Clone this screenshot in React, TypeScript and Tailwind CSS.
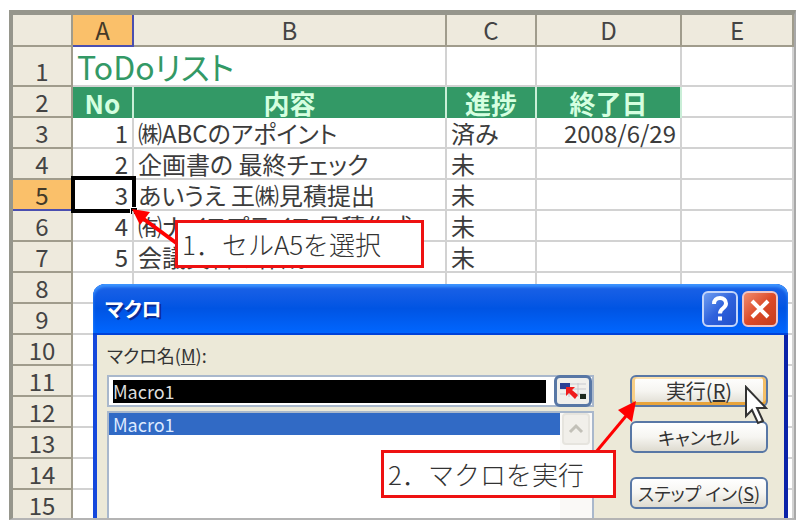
import { useState } from 'react'

const columns = ['A', 'B', 'C', 'D', 'E']

const todos = [
  { no: 1, title: '㈱ABCのアポイント', status: '済み', end: '2008/6/29' },
  { no: 2, title: '企画書の 最終チェック', status: '未', end: '' },
  { no: 3, title: 'あいうえ 王㈱見積提出', status: '未', end: '' },
  { no: 4, title: '㈲ナイスプライス 見積作成', status: '未', end: '' },
  { no: 5, title: '会議資料の作成', status: '未', end: '' },
]

const emptyRows = [8, 9, 10, 11, 12, 13, 14, 15]

const rowHead = 'border-r-2 border-b-2 border-[#a09c8c] bg-[#eeeadd] text-center font-normal text-[#444]'
const activeHead = 'border-r-2 border-b-2 border-[#4a4fb0] bg-[#fac06a] text-center font-normal text-[#443a28]'
const cell = 'border-r-2 border-b-2 border-[#d2d2d2] px-1 whitespace-nowrap'
const titleCell =
  'border-r-2 border-[#c9eed7] bg-[#339966] text-center text-[26px] leading-7 font-bold text-[#d5ffe0]'

function Sheet() {
  return (
    <table className="w-full table-fixed border-separate border-spacing-0 text-2xl leading-7 text-[#3c3c3c]">
      <colgroup>
        <col className="w-[60px]" />
        <col className="w-[61px]" />
        <col className="w-[313px]" />
        <col className="w-[90px]" />
        <col className="w-[145px]" />
        <col />
      </colgroup>
      <thead>
        <tr className="h-8">
          <th className={rowHead} />
          {columns.map((name) => (
            <th key={name} scope="col" className={name === 'A' ? activeHead : rowHead}>
              {name}
            </th>
          ))}
        </tr>
      </thead>
      <tbody>
        <tr className="h-10">
          <th scope="row" className={`${rowHead} align-bottom`}>1</th>
          <td colSpan={2} className={`${cell} text-[32px] leading-8 text-[#339966]`}>ToDoリスト</td>
          <td className={cell} />
          <td className={cell} />
          <td className={cell} />
        </tr>
        <tr className="h-[31px]">
          <th scope="row" className={rowHead}>2</th>
          <td className={titleCell}>No</td>
          <td className={titleCell}>内容</td>
          <td className={titleCell}>進捗</td>
          <td className={titleCell}>終了日</td>
          <td className={cell} />
        </tr>
        {todos.map((todo) => (
          <tr key={todo.no} className="h-[31px]">
            <th scope="row" className={todo.no === 3 ? activeHead : rowHead}>
              {todo.no + 2}
            </th>
            <td className={`${cell} relative text-right`}>
              {todo.no}
              {/* アクティブセルの枠 */}
              {todo.no === 3 && (
                <span className="absolute -top-1 -right-1 -bottom-1 -left-0.5 border-4 border-black">
                  <span className="absolute -right-1.5 -bottom-1.5 size-2 border border-white bg-black" />
                </span>
              )}
            </td>
            <td className={cell}>{todo.title}</td>
            <td className={cell}>{todo.status}</td>
            <td className={`${cell} text-right`}>{todo.end}</td>
            <td className={cell} />
          </tr>
        ))}
        {emptyRows.map((row) => (
          <tr key={row} className="h-[31px]">
            <th scope="row" className={rowHead}>{row}</th>
            {columns.map((name) => (
              <td key={name} className={cell} />
            ))}
          </tr>
        ))}
      </tbody>
    </table>
  )
}

const xpButton =
  'h-8 rounded-md border-2 border-[#5877a5] bg-linear-to-b from-white via-[#f6f5f1] to-[#dedbd0] leading-6 whitespace-nowrap text-[#333]'

const callout =
  "absolute border-3 border-[#ee1111] bg-white px-1 text-[26px] leading-[42px] font-light whitespace-nowrap text-[#333] [font-feature-settings:'palt'_0]"

function MacroDialog() {
  const [name, setName] = useState('Macro1')

  return (
    <section
      role="dialog"
      aria-label="マクロ"
      className="absolute top-[269px] right-1.5 -bottom-4 left-20 flex flex-col rounded-t-xl bg-linear-to-r from-[#1548dc] to-[#0a22a8] px-1"
    >
      <header className="-mx-1 flex h-[51px] shrink-0 items-center gap-1 rounded-t-xl border-b-2 border-[#0042d8] bg-linear-to-b from-[#1c62e6] via-[#0054e3] to-[#0066ff] pr-2.5 pl-3 shadow-[inset_0_3px_3px_#3d95ff]">
        <h2 className="flex-1 text-xl leading-8 font-bold text-white [text-shadow:2px_2px_#0a2c96]">マクロ</h2>
        <button
          type="button"
          aria-label="ヘルプ"
          className="flex size-9 items-center justify-center rounded-md border-2 border-[#c3d5fa] bg-linear-to-br from-[#6f9cf0] via-[#2f62dc] to-[#1f50cc]"
        >
          <svg viewBox="0 0 32 32" className="size-8" fill="none" stroke="#fff" strokeWidth="4">
            <path d="M10 11c0-4 2.500-6 6-6s6 2 6 5.500c0 5-6 4.500-6 10" />
            <path d="M16 23.500v4" />
          </svg>
        </button>
        <button
          type="button"
          aria-label="閉じる"
          className="flex size-9 items-center justify-center rounded-md border-2 border-[#f0c4c4] bg-linear-to-br from-[#f08a6c] via-[#dc4a28] to-[#c43c1c]"
        >
          <svg viewBox="0 0 32 32" className="size-8" stroke="#fff" strokeWidth="4">
            <path d="M8 8l16 16M24 8L8 24" />
          </svg>
        </button>
      </header>

      <div className="flex flex-1 flex-col bg-[#ece9d8] pt-2 pr-4 pl-2.5">
        <label htmlFor="macro-name" className="text-lg leading-6 text-[#333]">
          マクロ名(<u>M</u>):
        </label>
        <div className="mt-2 flex flex-1 gap-9">
          <div className="flex flex-1 flex-col gap-1">
            <div className="flex h-8 border-2 border-[#a9b8cc] bg-white">
              <div className="flex flex-1 items-center pr-2 pl-1">
                <input
                  id="macro-name"
                  value={name}
                  onChange={(e) => setName(e.target.value)}
                  className="h-[23px] w-full bg-black text-lg leading-5 text-[#ddd] outline-none"
                />
              </div>
              <button
                type="button"
                aria-label="参照"
                className="-my-0.5 flex w-[38px] items-center justify-center rounded-md border-3 border-[#5877a5] bg-[#f1f0ec]"
              >
                <svg viewBox="0 0 30 22" className="h-[22px] w-[30px]">
                  <path d="M2 4h26M2 9h26M2 14h26M11 3v14M20 3v14" stroke="#c9c9cf" />
                  <path d="M2 3h10v6H2z" fill="#2b3f94" />
                  <path d="M8 7h9l-3 3 6 5-3 4-6-6-3 3z" fill="#f01c1c" />
                  <path d="M22 14h6v5h-6z" fill="#1f2a1c" />
                </svg>
              </button>
            </div>
            <div className="flex flex-1 border-2 border-[#a9b8cc] bg-white">
              <ul className="flex-1">
                <li className="bg-[#316ac5] pl-1 text-lg leading-[22px] text-[#dde9ff]">Macro1</li>
              </ul>
              <div className="w-8 bg-[#faf9f7] px-0.5">
                <button
                  type="button"
                  aria-label="上へスクロール"
                  className="flex h-8 w-full items-center justify-center rounded border-2 border-[#e6e4de] bg-[#f1efea]"
                >
                  <svg viewBox="0 0 16 12" className="h-3 w-4" fill="none" stroke="#c2c0b8" strokeWidth="3">
                    <path d="M2 9l6-6 6 6" />
                  </svg>
                </button>
              </div>
            </div>
          </div>

          <div className="flex w-[138px] flex-col">
            <button
              type="button"
              className={`${xpButton} text-xl shadow-[inset_0_-3px_#e8a43c,inset_3px_0_#f8cf86,inset_-3px_0_#f4bf68,inset_0_2px_#fde2ae]`}
            >
              実行(<u>R</u>)
            </button>
            <button type="button" className={`${xpButton} mt-3.5 text-lg`}>キャンセル</button>
            <button type="button" className={`${xpButton} mt-6 text-lg`}>
              ステップ イン(<u>S</u>)
            </button>
          </div>
        </div>
      </div>

      {/* 吹き出し2と矢印 */}
      <svg viewBox="0 0 60 60" className="absolute top-[114px] right-[146px] size-[60px]">
        <path d="M14 54L44 18" stroke="#f00" strokeWidth="3" />
        <path d="M54 3L36 12l14 12z" fill="#f00" />
      </svg>
      <p className={`${callout} top-[166px] right-[172px] w-[235px]`}>2．マクロを実行</p>
      <svg viewBox="0 0 24 40" className="absolute top-[101px] right-[20px] h-10 w-6">
        <path d="M2 2v29l6-6 6 13 5-2-6-13h9z" fill="#fff" stroke="#333" strokeWidth="2" />
      </svg>
    </section>
  )
}

export default function App() {
  return (
    <main className="h-screen bg-white pt-2.5 pr-1 pb-2 pl-[9px] font-['Noto_Sans_CJK_JP',sans-serif] [font-feature-settings:'palt']">
      <div className="relative h-full overflow-hidden border-t-5 border-r-2 border-b-2 border-l-4 border-t-[#96968c] border-r-[#a8a8a8] border-b-[#b4b4b4] border-l-[#96968c]">
        <Sheet />
        {/* 吹き出し1と矢印 */}
        <svg viewBox="0 0 60 44" className="absolute top-[192px] left-[118px] h-11 w-[60px]">
          <path d="M10 10L48 38" stroke="#f00" strokeWidth="4" />
          <path d="M1 2l18 3-10 13z" fill="#f00" />
        </svg>
        <p className={`${callout} top-[205px] left-[162px] w-[249px]`}>1．セルA5を選択</p>
        <MacroDialog />
      </div>
    </main>
  )
}
